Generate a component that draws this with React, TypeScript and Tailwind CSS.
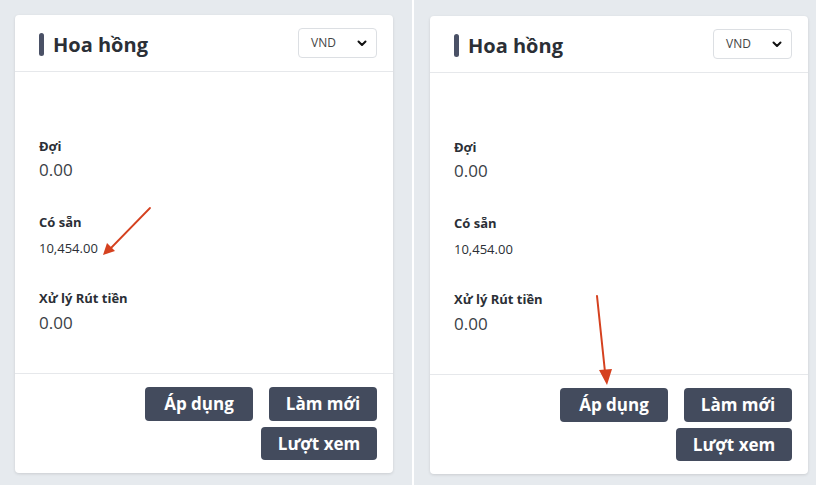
import React from "react";

type Props = {
  arrow: "left" | "right";
};

function CommissionCard({ arrow }: Props) {
  return (
    <div className="relative flex h-[458px] w-[378px] flex-col rounded-[4px] bg-white shadow-[0_1px_3px_rgba(0,0,0,0.12)]">
      <div className="flex h-[57px] items-center justify-between border-b border-[#e6e8eb] pl-[24px] pr-[16px] pt-[3px]">
        <div className="flex items-center gap-[9px]">
          <span className="h-[23px] w-[5px] rounded-full bg-[#4a5166]" />
          <span className="text-[20px] font-bold text-[#2b2f36]">Hoa hồng</span>
        </div>
        <div className="-mt-[3px] flex h-[30px] w-[79px] items-center justify-between rounded-[4px] border border-[#dcdfe3] pl-[12px] pr-[8px]">
          <span className="text-[12px] text-[#444]">VND</span>
          <svg viewBox="0 0 24 24" className="h-[12px] w-[12px]" fill="none" stroke="#111" strokeWidth="4" strokeLinecap="round" strokeLinejoin="round">
            <path d="M5 9l7 7 7-7" />
          </svg>
        </div>
      </div>

      <div className="flex-1 pl-[24px] pt-[65px] text-[#2b2f36]">
        <div className="text-[13px] font-bold leading-[18px]">Đợi</div>
        <div className="mt-[3px] text-[17px] leading-[24px] text-[#3a3e45]">0.00</div>
        <div className="mt-[31px] text-[13px] font-bold leading-[18px]">Có sẵn</div>
        <div className="mt-[7px] text-[13px] leading-[20px] text-[#2b2f36]">10,454.00</div>
        <div className="mt-[31px] text-[13px] font-bold leading-[18px]">Xử lý Rút tiền</div>
        <div className="mt-[4px] text-[17px] leading-[24px] text-[#3a3e45]">0.00</div>
      </div>

      <div className="flex h-[100px] flex-col items-end gap-[6px] border-t border-[#e6e8eb] pr-[16px] pt-[13px]">
        <div className="flex gap-[16px]">
          <button className="h-[34px] w-[108px] rounded-[4px] bg-[#434b5d] text-[17px] font-bold text-white">Áp dụng</button>
          <button className="h-[34px] w-[108px] rounded-[4px] bg-[#434b5d] text-[17px] font-bold text-white">Làm mới</button>
        </div>
        <button className="h-[33px] w-[116px] rounded-[4px] bg-[#434b5d] text-[17px] font-bold text-white">Lượt xem</button>
      </div>

      {arrow === "left" ? (
        <svg className="pointer-events-none absolute left-[85px] top-[190px] h-[60px] w-[60px]" viewBox="0 0 60 60">
          <path d="M50 3 L10 44" stroke="#d5411f" strokeWidth="1.8" strokeLinecap="round" />
          <path d="M3 50 L7 38 L15 46 Z" fill="#d5411f" />
        </svg>
      ) : (
        <svg className="pointer-events-none absolute left-[160px] top-[276px] h-[96px] w-[30px]" viewBox="0 0 30 96">
          <path d="M7 4 L15 80" stroke="#d5411f" strokeWidth="2" strokeLinecap="round" />
          <path d="M17 93 L9 78 L22 77 Z" fill="#d5411f" />
        </svg>
      )}
    </div>
  );
}

export default function App() {
  return (
    <div className="flex h-[485px] w-[816px] bg-[#e6eaee] font-['Open_Sans',sans-serif]">
      <div className="w-[412px] pl-[15px] pt-[15px]">
        <CommissionCard arrow="left" />
      </div>
      <div className="w-[2px] bg-white" />
      <div className="flex-1 pl-[16px] pt-[16px]">
        <CommissionCard arrow="right" />
      </div>
    </div>
  );
}
